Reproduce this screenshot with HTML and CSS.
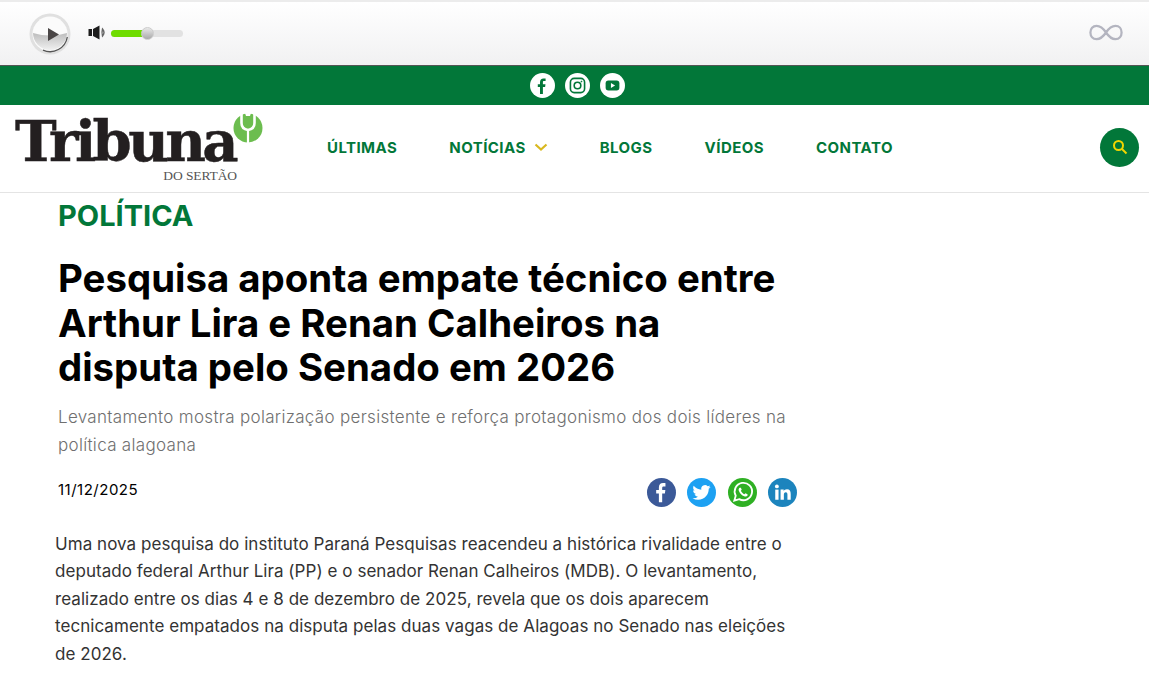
FILE: index.html
```html
<!DOCTYPE html>
<html lang="pt-BR">
<head>
    <meta charset="UTF-8">
    <meta name="viewport" content="width=device-width, initial-scale=1.0">
    <title>Tribuna do Sertão</title>
    <link rel="stylesheet" href="styles.css">
</head>
<body>
    <div class="player">
        <div class="player-left">
            <button class="play-btn" aria-label="Play">
                <svg width="42" height="42" viewBox="0 0 42 42">
                    <defs>
                        <linearGradient id="playLow" x1="0" y1="0" x2="0" y2="1">
                            <stop offset="0" stop-color="#bdbdbd"/>
                            <stop offset="1" stop-color="#f0f0f0"/>
                        </linearGradient>
                    </defs>
                    <circle cx="21" cy="21" r="20.500" fill="#e0e0e0"/>
                    <circle cx="21" cy="21" r="17.500" fill="#fbfbfb"/>
                    <path d="M4 20 Q21 25 38 20 A17 17 0 0 1 4 20 Z" fill="url(#playLow)"/>
                    <path d="M38.300 24 A17.500 17.500 0 0 1 14 37.200" fill="none" stroke="#555" stroke-width="1.300"/>
                    <path d="M19 15 L30 21.500 L19 28 Z" fill="#4a4646"/>
                </svg>
            </button>
            <svg class="vol-icon" width="19" height="15" viewBox="0 0 19 15">
                <path d="M0.500 4 H4 V11 H0.500 Z M5 4 L11.500 0.500 V14.500 L5 11 Z" fill="#1c1c1c"/>
                <path d="M14.500 4 Q17.500 7.500 14.500 11 Q13.500 7.500 14.500 4 Z" fill="none" stroke="#666" stroke-width="1.400"/>
            </svg>
            <div class="vol-track">
                <div class="vol-fill"></div>
                <div class="vol-knob"></div>
            </div>
        </div>
        <svg class="loop-icon" width="34" height="17" viewBox="0 0 36 18">
            <path d="M18 9 C14 3 11 2 8 2 C4 2 1.500 5 1.500 9 C1.500 13 4 16 8 16 C11 16 14 15 18 9 C22 3 25 2 28 2 C32 2 34.500 5 34.500 9 C34.500 13 32 16 28 16 C25 16 22 15 18 9 Z" fill="none" stroke="#b4b5c0" stroke-width="2.400"/>
        </svg>
    </div>

    <div class="social-bar">
        <a class="social-dot" href="#" aria-label="Facebook">
            <svg width="16" height="18" viewBox="0 0 16 18"><path d="M6 17 V10 H3.800 V7.200 H6 V5.200 C6 2.900 7.300 1.500 9.500 1.500 C10.500 1.500 11.300 1.600 11.600 1.600 V4.100 H10.200 C9.100 4.100 8.900 4.600 8.900 5.400 V7.200 H11.500 L11.100 10 H8.900 V17 Z" fill="#027739"/></svg>
        </a>
        <a class="social-dot" href="#" aria-label="Instagram">
            <svg width="17" height="17" viewBox="0 0 18 18" fill="none" stroke="#027739"><rect x="1.500" y="1.500" width="15" height="15" rx="4" stroke-width="1.700"/><circle cx="9" cy="9" r="3.500" stroke-width="1.700"/><circle cx="13.200" cy="4.800" r="0.600" fill="#027739" stroke-width="0.600"/></svg>
        </a>
        <a class="social-dot" href="#" aria-label="YouTube">
            <svg width="15" height="11" viewBox="0 0 16 12"><rect x="0.500" y="0.500" width="15" height="11" rx="3" fill="#027739"/><path d="M6.300 3.300 L10.800 6 L6.300 8.700 Z" fill="#fff"/></svg>
        </a>
    </div>

    <header class="site-header">
        <a class="logo" href="#">
            <span class="logo-name">Tribuna</span>
            <span class="logo-sub">DO SERTÃO</span>
            <svg class="logo-mark" width="30" height="30" viewBox="0 0 30 30">
                <circle cx="15" cy="15" r="14.500" fill="#6cbd4f"/>
                <path d="M8.500 0 V10 Q8.500 16 15 17 Q21.500 16 21.500 10 V0" fill="none" stroke="#fff" stroke-width="2.600"/>
                <path d="M15 17 V30" fill="none" stroke="#fff" stroke-width="2.200"/>
                <path d="M12 0 H18 L17 3 H13 Z" fill="#fff"/>
            </svg>
        </a>
        <nav class="main-nav">
            <a href="#">ÚLTIMAS</a>
            <a href="#" class="has-sub">NOTÍCIAS
                <svg width="14" height="8" viewBox="0 0 14 8"><path d="M1.500 1.500 L7 6.500 L12.500 1.500" fill="none" stroke="#d9b81f" stroke-width="2.200"/></svg>
            </a>
            <a href="#">BLOGS</a>
            <a href="#">VÍDEOS</a>
            <a href="#">CONTATO</a>
        </nav>
        <button class="search-btn" aria-label="Buscar">
            <svg width="16" height="16" viewBox="0 0 16 16" fill="none" stroke="#f2d600" stroke-width="2"><circle cx="6.500" cy="6.500" r="4.500"/><path d="M10 10 L14.500 14.500"/></svg>
        </button>
    </header>

    <main class="article">
        <div class="kicker">POLÍTICA</div>
        <h1>Pesquisa aponta empate técnico entre Arthur Lira e Renan Calheiros na disputa pelo Senado em 2026</h1>
        <p class="subtitle">Levantamento mostra polarização persistente e reforça protagonismo dos dois líderes na política alagoana</p>
        <div class="meta">
            <span class="date">11/12/2025</span>
            <div class="share">
                <a href="#" class="share-btn fb" aria-label="Facebook">
                    <svg width="29" height="29" viewBox="0 0 30 30"><path d="M12.300 25 V16 H9.500 V12.300 H12.300 V9.800 C12.300 6.900 14 5.300 16.600 5.300 C17.800 5.300 18.800 5.400 19.100 5.400 V8.700 H17.300 C15.900 8.700 15.700 9.400 15.700 10.300 V12.300 H19 L18.500 16 H15.700 V25 Z" fill="#fff"/></svg>
                </a>
                <a href="#" class="share-btn tw" aria-label="Twitter">
                    <svg width="29" height="29" viewBox="0 0 24 24"><g transform="translate(4.500 4.500) scale(0.625)"><path d="M23.950 4.570a10 10 0 0 1-2.820.77 4.960 4.960 0 0 0 2.160-2.720c-.95.560-2 .96-3.130 1.190a4.920 4.920 0 0 0-8.380 4.480C7.690 8.090 4.070 6.130 1.640 3.160a4.820 4.820 0 0 0-.67 2.480c0 1.710.87 3.210 2.190 4.100a4.900 4.900 0 0 1-2.230-.62v.06a4.920 4.920 0 0 0 3.950 4.830 5 5 0 0 1-2.210.08 4.940 4.940 0 0 0 4.600 3.420A9.870 9.870 0 0 1 0 19.540a14 14 0 0 0 7.560 2.210c9.050 0 14-7.500 14-13.980 0-.21 0-.42-.02-.63a9.940 9.940 0 0 0 2.460-2.550z" fill="#fff"/></g></svg>
                </a>
                <a href="#" class="share-btn wa" aria-label="WhatsApp">
                    <svg width="29" height="29" viewBox="0 0 30 30"><path d="M6.500 23.500 L8 18.300 A9 9 0 1 1 11.600 21.900 Z" fill="none" stroke="#fff" stroke-width="1.900"/><path d="M12 10 C11 10.800 10.700 12 11.300 13.500 C12.300 16 14.300 18 16.800 19 C18.300 19.500 19.500 19 20.200 18 L20.200 16.700 L18 15.700 L17 16.800 C15.500 16.200 14 14.800 13.300 13.200 L14.200 12.200 L13.300 10 Z" fill="#fff"/></svg>
                </a>
                <a href="#" class="share-btn in" aria-label="LinkedIn">
                    <svg width="29" height="29" viewBox="0 0 30 30"><rect x="7.500" y="12" width="3.400" height="10.500" fill="#fff"/><circle cx="9.200" cy="8.700" r="2" fill="#fff"/><path d="M13 12 H16.200 V13.500 C16.800 12.500 18 11.700 19.600 11.700 C22.500 11.700 23.500 13.500 23.500 16.500 V22.500 H20.100 V17.200 C20.100 15.800 19.700 14.800 18.400 14.800 C17 14.800 16.400 15.800 16.400 17.200 V22.500 H13 Z" fill="#fff"/></svg>
                </a>
            </div>
        </div>
        <p class="body-text">Uma nova pesquisa do instituto Paraná Pesquisas reacendeu a histórica rivalidade entre o deputado federal Arthur Lira (PP) e o senador Renan Calheiros (MDB). O levantamento, realizado entre os dias 4 e 8 de dezembro de 2025, revela que os dois aparecem tecnicamente empatados na disputa pelas duas vagas de Alagoas no Senado nas eleições de 2026.</p>
    </main>
</body>
</html>
```

FILE: styles.css
```css
* {
    box-sizing: border-box;
}
body {
    margin: 0;
    font-family: Inter, "Liberation Sans", sans-serif;
    background-color: #fff;
    color: #000;
    overflow: hidden;
}
a {
    text-decoration: none;
}

/* player */
.player {
    height: 66px;
    border-top: 2px solid #ececec;
    border-bottom: 1px solid #555;
    background: linear-gradient(#fff, #f1f1f2);
    display: flex;
    align-items: center;
    justify-content: space-between;
    padding: 0 26px 0 29px;
}
.player-left {
    display: flex;
    align-items: center;
}
.play-btn {
    width: 42px;
    height: 42px;
    padding: 0;
    border: none;
    background: none;
    margin-right: 17px;
}
.play-btn svg {
    display: block;
}
.vol-icon {
    margin: 0 4px 2px 0;
}
.vol-track {
    position: relative;
    width: 72px;
    height: 7px;
    margin-bottom: 1px;
    border-radius: 4px;
    background-color: #e2e2e2;
}
.vol-fill {
    width: 37px;
    height: 7px;
    border-radius: 4px;
    background-color: #6fdc00;
}
.vol-knob {
    position: absolute;
    left: 30px;
    top: -3px;
    width: 13px;
    height: 13px;
    border-radius: 50%;
    background: linear-gradient(#e8e8e8, #a9a9a9);
    border: 1px solid #ccc;
}
.loop-icon {
    margin-bottom: 3px;
}

/* green social bar */
.social-bar {
    height: 39px;
    padding-left: 5px;
    background-color: #027739;
    display: flex;
    align-items: center;
    justify-content: center;
    gap: 10px;
}
.social-dot {
    width: 25px;
    height: 25px;
    border-radius: 50%;
    background-color: #fff;
    display: flex;
    align-items: center;
    justify-content: center;
}

/* header */
.site-header {
    height: 88px;
    border-bottom: 1px solid #e4e4e4;
    display: flex;
    align-items: center;
    padding: 0 10px 3px 15px;
}
.logo {
    position: relative;
    display: block;
    width: 247px;
    height: 80px;
    flex-shrink: 0;
    color: #231f20;
}
.logo-name {
    display: block;
    font-family: "DejaVu Serif", serif;
    font-weight: 700;
    font-size: 56px;
    line-height: 54px;
    letter-spacing: -3.600px;
    margin-top: 7px;
    -webkit-text-stroke: 0.500px #231f20;
}
.logo-sub {
    position: absolute;
    right: 25px;
    top: 61px;
    font-family: "Liberation Serif", serif;
    font-size: 13.500px;
    color: #555;
    letter-spacing: -0.100px;
}
.logo-mark {
    position: absolute;
    left: 218px;
    top: 6px;
}
.main-nav {
    margin-left: 65px;
    display: flex;
    align-items: center;
    gap: 52px;
    flex: 1;
}
.main-nav a {
    color: #027739;
    font-size: 15px;
    font-weight: 700;
    letter-spacing: 0.450px;
    display: flex;
    align-items: center;
    gap: 8px;
}
.search-btn {
    width: 39px;
    height: 39px;
    padding: 0;
    border: none;
    border-radius: 50%;
    background-color: #027739;
    display: flex;
    align-items: center;
    justify-content: center;
}

/* article */
.article {
    width: 800px;
    padding-left: 58px;
}
.kicker {
    color: #027739;
    font-size: 29px;
    font-weight: 700;
    line-height: 46px;
}
h1 {
    margin: 17px 0 0;
    width: 740px;
    font-size: 38.400px;
    font-weight: 700;
    line-height: 44.500px;
}
.subtitle {
    margin: 13px 0 0;
    width: 740px;
    color: #6f6f6f;
    font-size: 17px;
    font-weight: 300;
    letter-spacing: 0.310px;
    line-height: 28px;
}
.meta {
    margin-top: 19px;
    width: 739px;
    display: flex;
    align-items: center;
    justify-content: space-between;
}
.date {
    font-size: 15px;
    letter-spacing: 0.500px;
    margin-bottom: 5px;
}
.share {
    display: flex;
    gap: 11.300px;
}
.share-btn {
    width: 29px;
    height: 29px;
    border-radius: 50%;
    display: block;
}
.share-btn svg {
    display: block;
}
.fb {
    background-color: #3b5998;
}
.tw {
    background-color: #1da1f2;
}
.wa {
    background-color: #2fb024;
}
.in {
    background-color: #1c84bd;
}
.body-text {
    margin: 24px 0 0 -3px;
    width: 732px;
    font-size: 17px;
    letter-spacing: 0.050px;
    line-height: 27.600px;
    color: #333;
}
```
